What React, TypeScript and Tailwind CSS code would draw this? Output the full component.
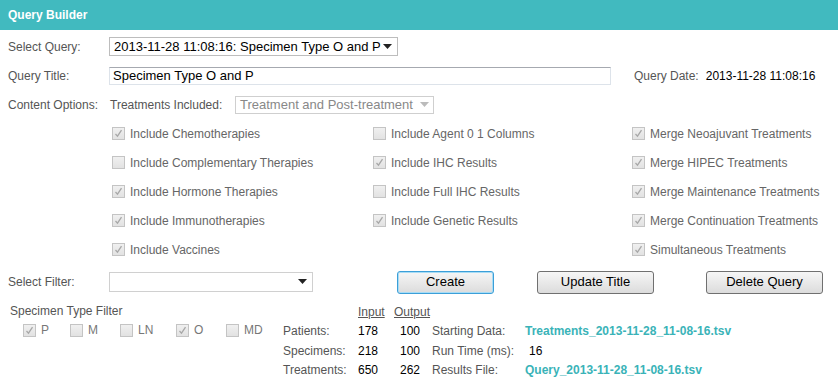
import React from 'react';

const font = { fontFamily: '"Liberation Sans", Arial, sans-serif' };

const Box = ({ checked }: { checked?: boolean }) => (
  <span className="inline-flex w-[13px] h-[13px] shrink-0 items-center justify-center border border-[#c4c4c4] bg-gradient-to-b from-[#f0f0f0] to-[#e2e2e2]">
    {checked && (
      <svg width="9" height="9" viewBox="0 0 9 9">
        <path d="M1.5 5 L3.5 7.2 L7.5 1.2" stroke="#a8a8a8" strokeWidth="1.3" fill="none" />
      </svg>
    )}
  </span>
);

const Check = ({ label, checked }: { label: string; checked?: boolean }) => (
  <div className="flex items-center gap-[5px] h-[29px]">
    <Box checked={checked} />
    <span className="text-[12px] text-[#666]">{label}</span>
  </div>
);

const Arrow = ({ color }: { color: string }) => (
  <svg width="9" height="5" viewBox="0 0 9 5">
    <path d="M0 0 L9 0 L4.5 5 Z" fill={color} />
  </svg>
);

const Btn = ({ label, w, focus }: { label: string; w: string; focus?: boolean }) => (
  <button
    className={`${w} h-[23px] rounded-[3px] border text-[13px] text-black bg-gradient-to-b from-[#f6f6f6] to-[#dcdcdc] ${
      focus ? 'border-[#3c9fd8] shadow-[inset_0_0_0_1px_#a8dcf5]' : 'border-[#707070]'
    }`}
  >
    {label}
  </button>
);

export default function App() {
  const col1 = [
    ['Include Chemotherapies', true],
    ['Include Complementary Therapies', false],
    ['Include Hormone Therapies', true],
    ['Include Immunotherapies', true],
    ['Include Vaccines', true],
  ] as const;
  const col2 = [
    ['Include Agent 0 1 Columns', false],
    ['Include IHC Results', true],
    ['Include Full IHC Results', false],
    ['Include Genetic Results', true],
  ] as const;
  const col3 = [
    ['Merge Neoajuvant Treatments', true],
    ['Merge HIPEC Treatments', true],
    ['Merge Maintenance Treatments', true],
    ['Merge Continuation Treatments', true],
    ['Simultaneous Treatments', true],
  ] as const;

  return (
    <div className="w-[838px] h-[380px] bg-white overflow-hidden" style={font}>
      <div className="h-[30px] bg-[#41babf] flex items-center px-2">
        <span className="text-white font-bold text-[12px]">Query Builder</span>
      </div>

      <div className="px-2 pt-[2px]">
        <div className="flex items-center h-[29px]">
          <span className="w-[101px] text-[12px] text-[#555]">Select Query:</span>
          <div className="w-[289px] h-[19px] border border-[#bdbdbd] flex items-center justify-between pl-[4px] pr-[5px]">
            <span className="text-[13px] text-black">2013-11-28 11:08:16: Specimen Type O and P</span>
            <Arrow color="#222" />
          </div>
        </div>

        <div className="flex items-center h-[29px]">
          <span className="w-[101px] text-[12px] text-[#555]">Query Title:</span>
          <div className="w-[502px] h-[18px] border border-[#dde3ea] border-t-[#a6a9b0] flex items-center pl-[3px]">
            <span className="text-[13px] text-black">Specimen Type O and P</span>
          </div>
          <span className="ml-[23px] text-[12px] text-[#555]">Query Date:</span>
          <span className="ml-[7px] text-[12px] text-black">2013-11-28 11:08:16</span>
        </div>

        <div className="flex items-center h-[29px]">
          <span className="w-[102px] text-[12px] text-[#555]">Content Options:</span>
          <span className="w-[125px] text-[12px] text-[#555]">Treatments Included:</span>
          <div className="w-[199px] h-[18px] border border-[#cfcfcf] flex items-center justify-between pl-[4px] pr-[4px]">
            <span className="text-[13px] text-[#888]">Treatment and Post-treatment</span>
            <Arrow color="#bbb" />
          </div>
        </div>

        <div className="flex pl-[104px]">
          <div className="w-[261px]">
            {col1.map(([l, c]) => (
              <Check key={l} label={l} checked={c} />
            ))}
          </div>
          <div className="w-[259px]">
            {col2.map(([l, c]) => (
              <Check key={l} label={l} checked={c} />
            ))}
          </div>
          <div>
            {col3.map(([l, c]) => (
              <Check key={l} label={l} checked={c} />
            ))}
          </div>
        </div>

        <div className="flex items-center h-[35px]">
          <span className="w-[101px] text-[12px] text-[#555]">Select Filter:</span>
          <div className="w-[204px] h-[20px] border border-[#d0d0d0] flex items-center justify-end pr-[5px]">
            <Arrow color="#222" />
          </div>
          <div className="ml-[84px]">
            <Btn label="Create" w="w-[97px]" focus />
          </div>
          <div className="ml-[43px]">
            <Btn label="Update Title" w="w-[117px]" />
          </div>
          <div className="ml-[52px]">
            <Btn label="Delete Query" w="w-[117px]" />
          </div>
        </div>

        <div className="flex pt-[3px]">
          <div className="w-[275px] pl-[2px]">
            <div className="h-[18px] flex items-center text-[12px] text-[#555]">Specimen Type Filter</div>
            <div className="flex items-center h-[20px] pl-[13px]">
              {[
                ['P', true, 'w-[47px]'],
                ['M', false, 'w-[50px]'],
                ['LN', false, 'w-[56px]'],
                ['O', true, 'w-[50px]'],
                ['MD', false, 'w-[50px]'],
              ].map(([l, c, w]) => (
                <div key={l as string} className={`flex items-center gap-[5px] ${w}`}>
                  <Box checked={c as boolean} />
                  <span className="text-[12px] text-[#777]">{l as string}</span>
                </div>
              ))}
            </div>
          </div>

          <div className="grid grid-cols-[75px_36px_38px_93px_1fr] text-[12px] auto-rows-[19.5px] items-center">
            <span />
            <span className="underline text-[#555]">Input</span>
            <span className="underline text-[#555]">Output</span>
            <span />
            <span />

            <span className="text-[#555]">Patients:</span>
            <span className="text-black">178</span>
            <span className="text-black pl-[6px]">100</span>
            <span className="text-[#555]">Starting Data:</span>
            <span className="font-bold text-[#3ab3b8]">Treatments_2013-11-28_11-08-16.tsv</span>

            <span className="text-[#555]">Specimens:</span>
            <span className="text-black">218</span>
            <span className="text-black pl-[6px]">100</span>
            <span className="text-[#555]">Run Time (ms):</span>
            <span className="text-black pl-[4px]">16</span>

            <span className="text-[#555]">Treatments:</span>
            <span className="text-black">650</span>
            <span className="text-black pl-[6px]">262</span>
            <span className="text-[#555]">Results File:</span>
            <span className="font-bold text-[#3ab3b8]">Query_2013-11-28_11-08-16.tsv</span>
          </div>
        </div>
      </div>
    </div>
  );
}
